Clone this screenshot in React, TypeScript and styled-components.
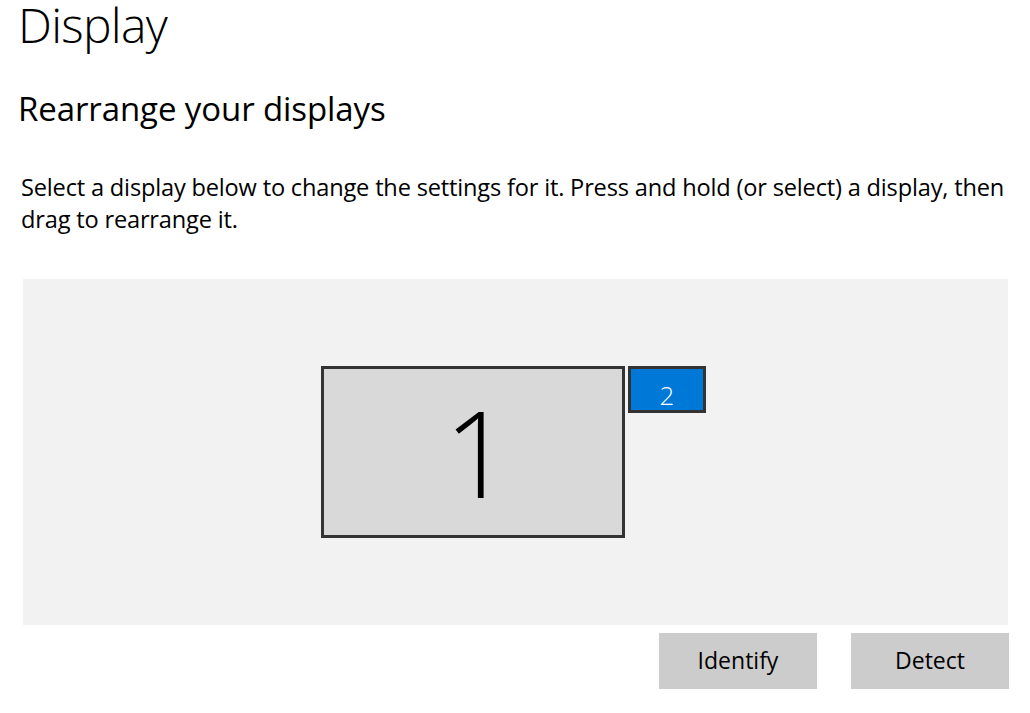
import styled, { createGlobalStyle } from "styled-components";

const GlobalStyle = createGlobalStyle`
  html, body {
    margin: 0;
    padding: 0;
    background: #ffffff;
  }
  body {
    font-family: "Open Sans", "Noto Sans", "Liberation Sans", sans-serif;
    color: #000000;
  }
`;

const Page = styled.div`
  width: 1030px;
  height: 713px;
  overflow: hidden;
  box-sizing: border-box;
  padding: 0 21px 0 18px;
  display: flex;
  flex-direction: column;
`;

const Title = styled.h1`
  margin: 0;
  font-weight: 300;
  font-size: 48px;
  line-height: 50px;
  letter-spacing: -0.7px;
  white-space: nowrap;
`;

const Subtitle = styled.h2`
  margin: 39px 0 0;
  font-weight: 400;
  font-size: 33px;
  line-height: 40px;
  letter-spacing: -0.1px;
  white-space: nowrap;
`;

const Description = styled.p`
  margin: 42px 0 0 3px;
  font-size: 23.6px;
  line-height: 32px;
  letter-spacing: -0.18px;
`;

const Arrangement = styled.div`
  margin: 44px 0 0 5px;
  width: 985px;
  height: 346px;
  background: #f2f2f2;
  display: flex;
  justify-content: center;
  align-items: center;
`;

const Group = styled.div`
  display: flex;
  align-items: flex-start;
  gap: 3px;
  margin-left: -4px;
`;

const Monitor = styled.div<{ $w: number; $h: number; $active?: boolean }>`
  box-sizing: border-box;
  width: ${({ $w }) => $w}px;
  height: ${({ $h }) => $h}px;
  border: 3px solid #333333;
  background: ${({ $active }) => ($active ? "#0078d7" : "#d9d9d9")};
  color: ${({ $active }) => ($active ? "#ffffff" : "#000000")};
  display: flex;
  justify-content: center;
  align-items: center;
  font-weight: 300;
  cursor: pointer;
`;

const BigNumber = styled.span`
  font-size: 119px;
  line-height: 1;
  margin: 0 0 0 10px;
`;

const SmallNumber = styled.span`
  font-size: 26px;
  line-height: 1;
  margin-top: 10px;
`;

const Buttons = styled.div`
  display: flex;
  justify-content: flex-end;
  gap: 34px;
  margin-top: 8px;
`;

const Button = styled.button`
  width: 158px;
  height: 56px;
  border: none;
  background: #cccccc;
  font-family: inherit;
  font-size: 23px;
  color: #000000;
  padding: 0 0 2px;
  cursor: pointer;
`;

export default function App() {
  return (
    <>
      <GlobalStyle />
      <Page>
        <Title>Display</Title>
        <Subtitle>Rearrange your displays</Subtitle>
        <Description>
          Select a display below to change the settings for it. Press and hold
          (or select) a display, then drag to rearrange it.
        </Description>
        <Arrangement>
          <Group>
            <Monitor $w={304} $h={172}>
              <BigNumber>1</BigNumber>
            </Monitor>
            <Monitor $w={78} $h={47} $active>
              <SmallNumber>2</SmallNumber>
            </Monitor>
          </Group>
        </Arrangement>
        <Buttons>
          <Button>Identify</Button>
          <Button>Detect</Button>
        </Buttons>
      </Page>
    </>
  );
}
